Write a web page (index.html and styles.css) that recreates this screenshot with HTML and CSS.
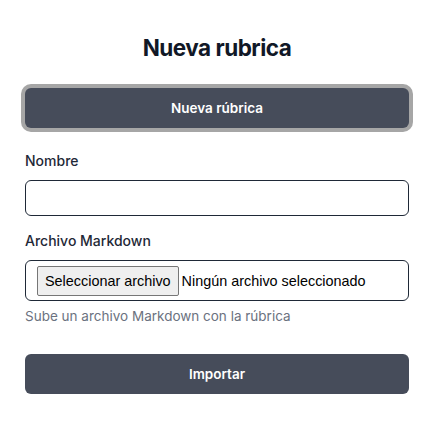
FILE: index.html
```html
<!DOCTYPE html>
<html lang="es">
<head>
<meta charset="utf-8">
<title>Nueva rubrica</title>
<link rel="stylesheet" href="styles.css">
</head>
<body>
<main class="page">
  <h1 class="title">Nueva rubrica</h1>
  <button class="btn btn-focus" type="button">Nueva rúbrica</button>
  <form class="form">
    <label class="label label-first" for="nombre">Nombre</label>
    <input class="text-input" id="nombre" type="text">
    <label class="label label-next">Archivo Markdown</label>
    <div class="file-input">
      <span class="file-btn">Seleccionar archivo</span>
      <span class="file-name">Ningún archivo seleccionado</span>
    </div>
    <p class="help">Sube un archivo Markdown con la rúbrica</p>
    <button class="btn btn-submit" type="button">Importar</button>
  </form>
</main>
</body>
</html>
```
FILE: styles.css
```css
* { box-sizing: border-box; }
html, body { margin: 0; padding: 0; background: #ffffff; }
body { font-family: Inter, "Noto Sans", sans-serif; color: #111827; }
.page {
  width: 384px;
  margin-left: 25px;
  display: flex;
  flex-direction: column;
}
.title {
  margin: 34px 0 0;
  font-size: 22.5px;
  line-height: 28px;
  font-weight: 700;
  text-align: center;
  letter-spacing: -0.5px;
  color: #111827;
}
.btn {
  display: block;
  width: 100%;
  height: 40px;
  border: none;
  border-radius: 6px;
  background: #464c5a;
  color: #ffffff;
  font-family: Inter, sans-serif;
  font-size: 13.5px;
  font-weight: 600;
  cursor: pointer;
}
.btn-focus {
  margin-top: 26px;
  box-shadow: 0 0 0 4px #a6a6a6;
}
.form { display: flex; flex-direction: column; }
.label {
  font-size: 14px;
  line-height: 20px;
  font-weight: 500;
  color: #1f2937;
  margin-bottom: 9px;
}
.label-first { margin-top: 23px; }
.label-next { margin-top: 15px; }
.text-input {
  height: 36px;
  width: 100%;
  border: 1px solid #1f2937;
  border-radius: 6px;
  padding: 0 10px;
  font-size: 14px;
  font-family: Inter, sans-serif;
}
.file-input {
  height: 41px;
  border: 1px solid #1f2937;
  border-radius: 6px;
  display: flex;
  align-items: center;
  padding: 0 11px;
  font-family: "Liberation Sans", Arial, sans-serif;
  font-size: 14.4px;
  color: #000000;
}
.file-btn {
  height: 30px;
  display: flex;
  align-items: center;
  padding: 0 7px;
  border: 1px solid #767676;
  border-radius: 2px;
  background: #efefef;
  margin-right: 3px;
}
.help {
  margin: 5px 0 0;
  font-size: 13.5px;
  line-height: 20px;
  color: #6b7280;
}
.btn-submit { margin-top: 28px; }
```
